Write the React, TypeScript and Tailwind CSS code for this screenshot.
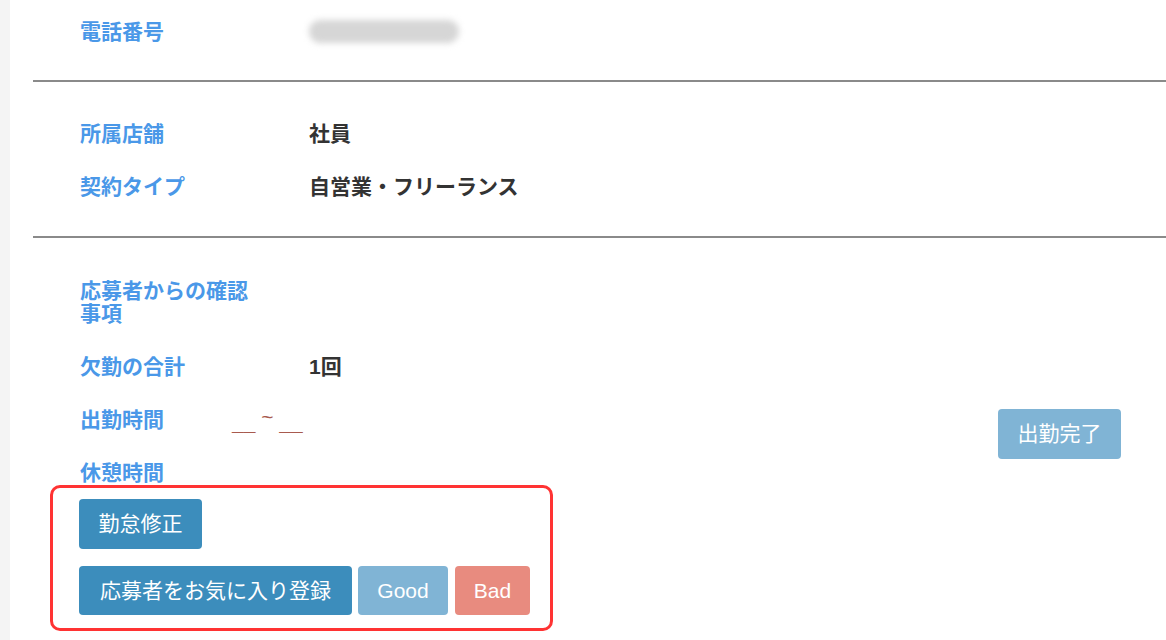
const font = { fontFamily: '"Liberation Sans", "Noto Sans CJK JP", sans-serif' };

type Row = { label: string; value?: string; labelWidth: string };

function InfoRow({ label, value, labelWidth }: Row) {
  return (
    <div className="flex h-[53px] items-center">
      <div className={`${labelWidth} shrink-0 text-[21px] font-bold leading-[23px] text-[#4a98e8]`}>{label}</div>
      {value && <div className="text-[21px] font-bold leading-[23px] text-[#333]">{value}</div>}
    </div>
  );
}

function Divider() {
  return <div className="h-[2px] bg-[#8a8a8a]" />;
}

export default function App() {
  return (
    <div className="flex h-[640px] w-[1166px] overflow-hidden bg-white" style={font}>
      <div className="w-[10px] shrink-0 bg-[#f4f4f4]" />

      <div className="flex-1 pl-[23px]">
        {/* contact */}
        <div className="pl-[47px] pt-[5px]">
          <div className="flex h-[53px] items-center">
            <div className="w-[229px] shrink-0 text-[21px] font-bold leading-[23px] text-[#4a98e8]">電話番号</div>
            <div className="h-[23px] w-[150px] rounded-full bg-[#d6d6d6] blur-[3px]" />
          </div>
        </div>
        <div className="mt-[22px]">
          <Divider />
        </div>

        {/* shop */}
        <div className="pl-[47px] pt-[25px] pb-[23px]">
          <InfoRow label="所属店舗" value="社員" labelWidth="w-[229px]" />
          <InfoRow label="契約タイプ" value="自営業・フリーランス" labelWidth="w-[229px]" />
        </div>
        <Divider />

        {/* attendance */}
        <div className="pl-[47px] pt-[26px]">
          <div className="flex h-[76px] items-center">
            <div className="w-[176px] text-[21px] font-bold leading-[23px] text-[#4a98e8]">応募者からの確認事項</div>
          </div>
          <InfoRow label="欠勤の合計" value="1回" labelWidth="w-[229px]" />
          <div className="flex h-[53px] items-center">
            <div className="w-[152px] shrink-0 text-[21px] font-bold leading-[23px] text-[#4a98e8]">出勤時間</div>
            <div className="pt-[6px] text-[21px] font-bold leading-[23px] text-[#a85a4e]">
              __ <span className="relative -top-[6px] font-normal">~</span> __
            </div>
            <button className="mr-[45px] ml-auto mt-[29px] h-[50px] w-[123px] rounded-[4px] bg-[#80b4d5] text-[21px] text-white">
              出勤完了
            </button>
          </div>
          <div className="flex h-[53px] items-center">
            <div className="w-[152px] shrink-0 text-[21px] font-bold leading-[23px] text-[#4a98e8]">休憩時間</div>
            <div className="pt-[6px] text-[21px] font-bold leading-[23px] text-[#a85a4e]">__</div>
          </div>
        </div>

        <div className="relative ml-[17px] -mt-[14px] flex w-fit flex-col gap-[17px] rounded-[10px] border-[3px] border-[#ff3333] pt-[11px] pr-[20px] pb-[13px] pl-[26px]">
          <div>
            <button className="h-[50px] w-[123px] rounded-[4px] bg-[#3c8dbc] text-[21px] text-white">勤怠修正</button>
          </div>
          <div className="flex gap-[6px]">
            <button className="h-[49px] w-[273px] rounded-[4px] bg-[#3c8dbc] text-[21px] text-white">
              応募者をお気に入り登録
            </button>
            <button className="h-[49px] w-[90px] rounded-[4px] bg-[#80b4d5] text-[21px] text-white">Good</button>
            <button className="ml-[1px] h-[49px] w-[75px] rounded-[4px] bg-[#e88b7f] text-[21px] text-white">Bad</button>
          </div>
        </div>
      </div>
    </div>
  );
}
